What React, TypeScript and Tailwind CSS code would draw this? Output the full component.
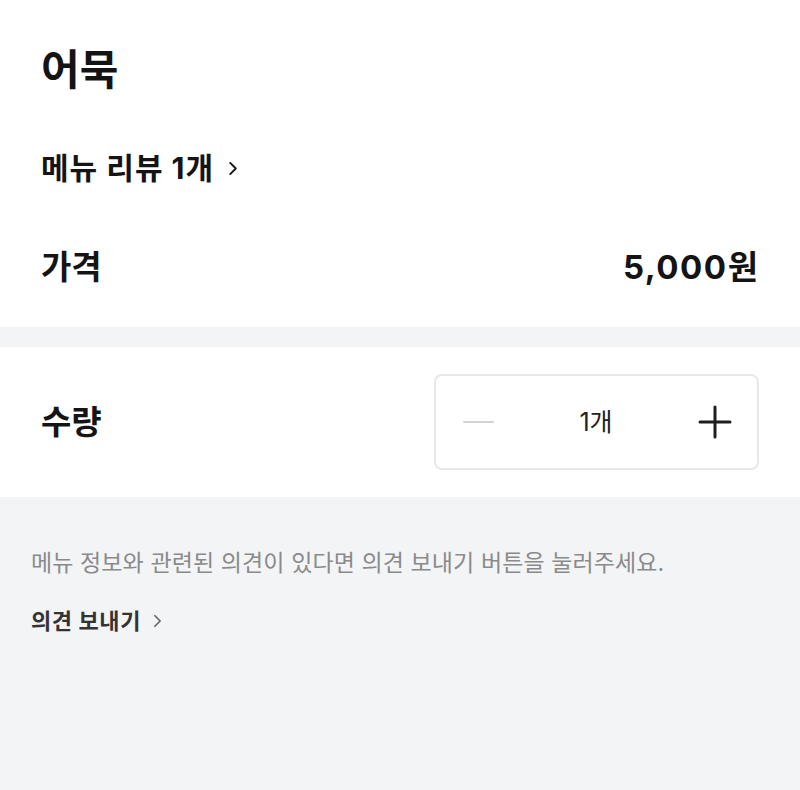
import React from "react";

const font = { fontFamily: '"Inter", "Noto Sans CJK KR", "Noto Sans", sans-serif' };

function Chevron({ className }: { className?: string }) {
  return (
    <svg viewBox="0 0 10 16" className={className} fill="none" stroke="currentColor" strokeWidth={2} strokeLinecap="round" strokeLinejoin="round">
      <path d="M2 2l6 6-6 6" />
    </svg>
  );
}

export default function App() {
  return (
    <div className="w-[800px] h-[790px] bg-[#f3f4f6] flex flex-col" style={font}>
      <div className="bg-white px-[41px] pt-[49px] h-[327px] flex flex-col">
        <h1 className="text-[42px] font-bold leading-none text-[#141414]">어묵</h1>
        <div className="mt-[62px] flex items-center gap-[14px] text-[#141414]">
          <span className="text-[30px] font-bold leading-none tracking-[1px]">메뉴 리뷰 1개</span>
          <Chevron className="w-[10px] h-[15px]" />
        </div>
        <div className="mt-[68px] flex items-center justify-between text-[#141414]">
          <span className="text-[33px] font-bold leading-none">가격</span>
          <span className="text-[33px] font-bold leading-none mr-[1px]">
            <span className="tracking-[1.5px]">5,000</span>원
          </span>
        </div>
      </div>
      <div className="h-[20px]" />
      <div className="bg-white h-[150px] px-[41px] flex items-center justify-between">
        <span className="text-[33px] font-bold leading-none text-[#141414]">수량</span>
        <div className="w-[325px] h-[96px] border-2 border-[#e8e8e8] rounded-[8px] flex items-center justify-between pl-[27px] pr-[25px]">
          <span className="w-[31px] h-[2.5px] bg-[#d3d3d3] rounded" />
          <span className="text-[25px] text-[#222] leading-none">1개</span>
          <svg viewBox="0 0 34 34" className="w-[34px] h-[34px]" stroke="#1e1e1e" strokeWidth={3} strokeLinecap="round">
            <path d="M2 17h30M17 2v30" />
          </svg>
        </div>
      </div>
      <div className="px-[31px] pt-[55px]">
        <p className="text-[23px] leading-none text-[#8a8a8a] tracking-[0.1px]">메뉴 정보와 관련된 의견이 있다면 의견 보내기 버튼을 눌러주세요.</p>
        <div className="mt-[35px] flex items-center gap-[12px] text-[#333]">
          <span className="text-[22px] font-bold leading-none tracking-[0.6px]">의견 보내기</span>
          <Chevron className="w-[9px] h-[14px] text-[#666]" />
        </div>
      </div>
    </div>
  );
}
